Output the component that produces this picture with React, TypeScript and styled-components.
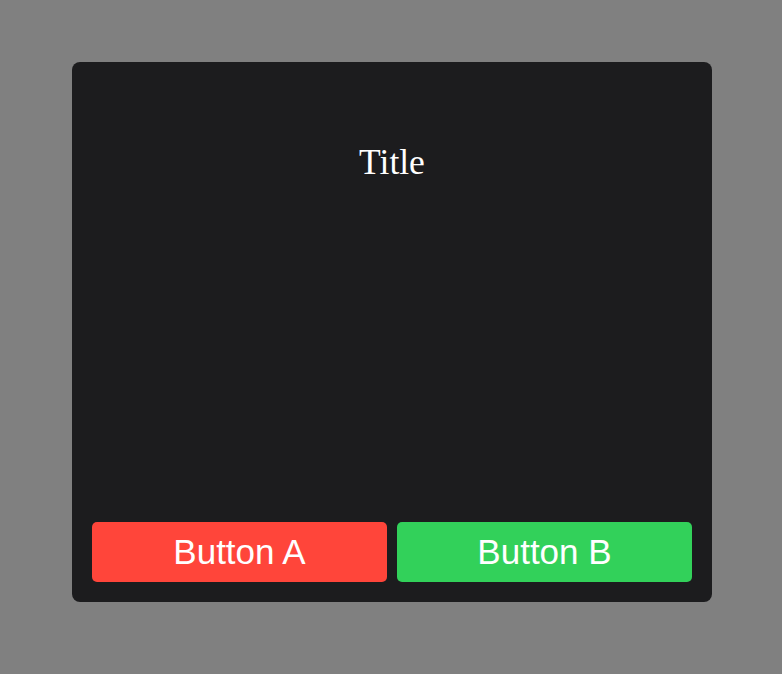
import React from "react";
import styled, { createGlobalStyle } from "styled-components";

const Global = createGlobalStyle`
  html, body { margin: 0; padding: 0; background: #808080; }
  body { font-family: "Liberation Sans", Arial, sans-serif; }
`;

const Page = styled.div`
  width: 782px;
  height: 674px;
  box-sizing: border-box;
  padding: 62px 70px 0 72px;
  display: flex;
  align-items: flex-start;
`;

const Card = styled.div`
  width: 640px;
  height: 540px;
  box-sizing: border-box;
  background: #1c1c1e;
  border-radius: 8px;
  padding: 20px;
  display: flex;
  flex-direction: column;
`;

const Title = styled.h1`
  margin: 60px 0 0;
  font-family: "Liberation Serif", "Times New Roman", serif;
  font-weight: 400;
  font-size: 35.5px;
  line-height: 40px;
  color: #ffffff;
  text-align: center;
`;

const Spacer = styled.div`
  flex: 1;
`;

const ButtonRow = styled.div`
  display: grid;
  grid-template-columns: 1fr 1fr;
  gap: 10px;
`;

const Button = styled.button<{ $bg: string }>`
  height: 60px;
  border: none;
  border-radius: 5px;
  background: ${(p) => p.$bg};
  color: #ffffff;
  font-family: "Liberation Sans", Arial, sans-serif;
  font-size: 35px;
  padding: 0;
  cursor: pointer;
`;

export default function App() {
  return (
    <>
      <Global />
      <Page>
        <Card>
          <Title>Title</Title>
          <Spacer />
          <ButtonRow>
            <Button $bg="#ff453a">Button A</Button>
            <Button $bg="#32d15a">Button B</Button>
          </ButtonRow>
        </Card>
      </Page>
    </>
  );
}
